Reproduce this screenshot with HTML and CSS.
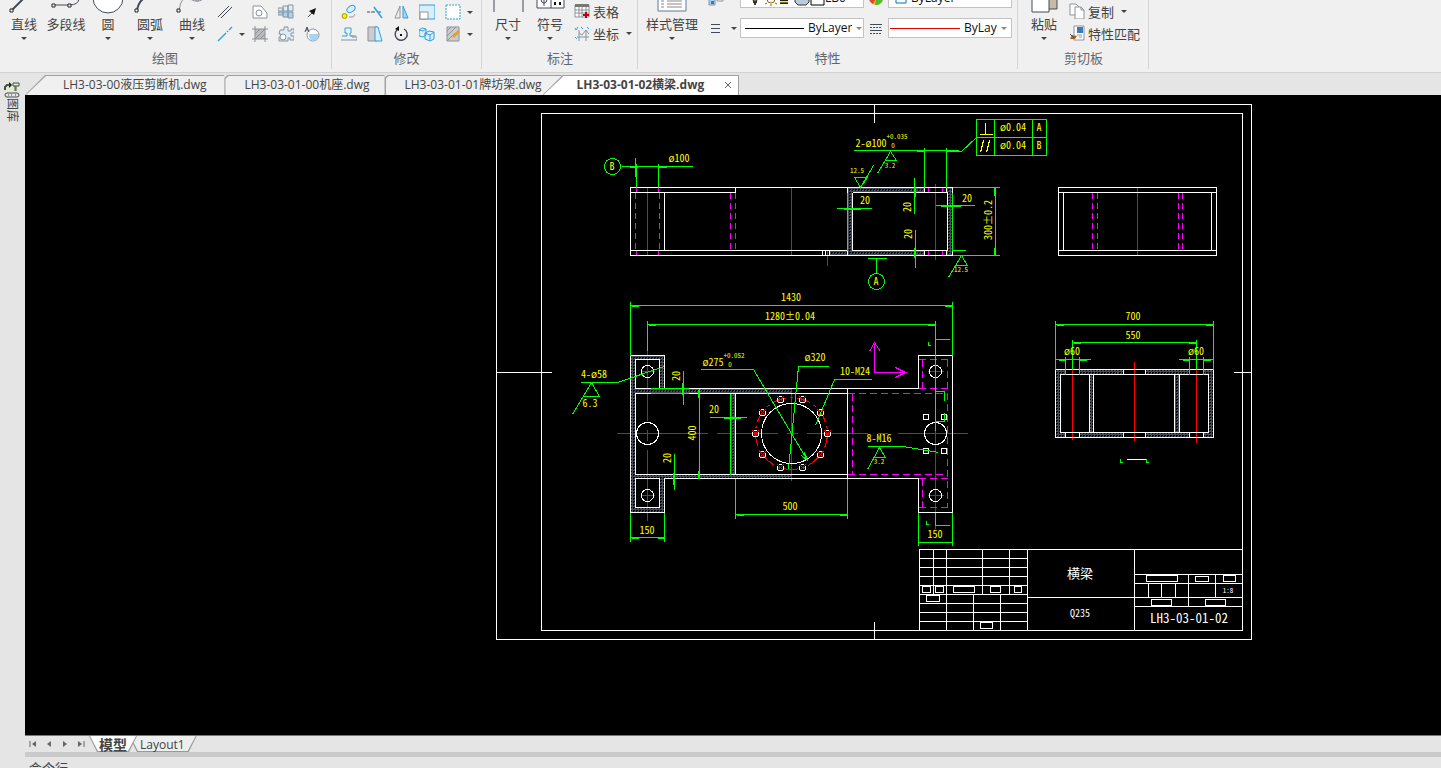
FILE: index.html
```html
<!DOCTYPE html>
<html lang="zh-CN">
<head>
<meta charset="utf-8">
<title>LH3-03-01-02横梁.dwg</title>
<link rel="stylesheet" href="styles.css">
</head>
<body>
<header class="ribbon">
  <section class="group group-draw">
    <div class="tools">
      <button class="big"><svg class="art" viewBox="0 0 32 14"><path d="M4 10 15-1" stroke-width="2"/><path class="node" d="M2 9h3v3H2z"/></svg>直线<i class="caret"></i></button>
      <button class="big"><svg class="art" viewBox="0 0 32 14"><path d="M4 5h15q10 0 10-7"/><path class="node" d="M2 4h3v3H2zM18 4h3v3h-3z"/></svg>多段线</button>
      <button class="big"><svg class="art" viewBox="0 0 32 14"><circle class="paper" cx="16" cy="-2" r="15"/></svg>圆<i class="caret"></i></button>
      <button class="big"><svg class="art" viewBox="0 0 32 14"><path d="M3 11Q4 3 9-1" stroke-width="2"/><path class="node" d="M1 9h3v3H1z"/></svg>圆弧<i class="caret"></i></button>
      <button class="big"><svg class="art" viewBox="0 0 32 14"><path class="dim" d="M3 11Q5-6 14-1t14-1M18-1q3 4 6 0"/><path class="node" d="M1 9h3v3H1z"/></svg>曲线<i class="caret"></i></button>
      <div class="grid">
        <button aria-label="构造线"><svg class="icon" viewBox="0 0 16 16"><path d="M1 13 12 2M4 14 15 3"/></svg></button>
        <button aria-label="区域"><svg class="icon" viewBox="0 0 16 16"><path class="dim paper" d="M1 2h8l6 7v5H1z"/><circle class="dim" cx="7" cy="9" r="3"/></svg></button>
        <button aria-label="螺栓"><svg class="icon" viewBox="0 0 16 16"><path class="dim pale" d="M0 4h5v3H0zM5 2h5v5H5zM10 1h5v6h-5z"/><path class="dim sky" d="M0 8h5v3H0zM5 8h5v5H5zM10 8h5v6h-5z"/></svg></button>
        <button aria-label="箭头"><svg class="icon" viewBox="0 0 16 16"><path d="M4 13 9 8"/><path class="black" d="m12 4-2 7-5-4z"/></svg></button>
        <button class="drop" aria-label="射线"><svg class="icon" viewBox="0 0 16 16"><path class="blue" d="m1 15 8-8m1-1 1-1m1-1 3-3" stroke-width="1.4"/></svg><i class="caret"></i></button>
        <button aria-label="填充"><svg class="icon" viewBox="0 0 16 16"><path fill="#bbb" stroke="none" d="M3 3h10v10H3z"/><path class="dim" d="M3 0v16M13 0v16M0 3h16M0 13h16M3 8l5-5M3 13 13 3M8 13l5-5"/></svg></button>
        <button aria-label="零件"><svg class="icon" viewBox="0 0 16 16"><path class="dim pale" d="M2 4h4V1h4v4h3V3h3v4h-3v3h3v4h-4v-2h-2v3H1v-4h2V8H1z"/><circle class="dim paper" cx="5" cy="11" r="3"/></svg></button>
        <button aria-label="方向"><svg class="icon" viewBox="0 0 16 16"><circle class="dim paper" cx="9" cy="9" r="6"/><path class="sky" stroke="none" d="M5 8h9q1 6-5 7-4-1-4-7"/><path d="m1 6 2-5 2 5M2 4h2"/></svg></button>
      </div>
    </div>
    <h2>绘图</h2>
  </section>
  <section class="group group-modify">
    <div class="tools">
      <div class="grid">
        <button aria-label="复制对象"><svg class="icon" viewBox="0 0 16 16"><ellipse class="blue pale" cx="10" cy="5" rx="4.500" ry="3" transform="rotate(-35 10 5)"/><circle cx="3.500" cy="12" r="2.500" fill="#fe0" stroke="#a90"/><path stroke="#b88" d="M8 13h4l2-3"/></svg></button>
        <button aria-label="修剪"><svg class="icon" viewBox="0 0 16 16"><path d="M0 8h3m1 0h4"/><path class="blue" d="m7 3 8 11M10 8h4" stroke-width="1.5"/></svg></button>
        <button aria-label="镜像"><svg class="icon" viewBox="0 0 16 16"><path class="dim" d="M2 14h5V2z"/><path class="blue sky" d="M10 14h5L10 2z"/></svg></button>
        <button aria-label="缩放"><svg class="icon" viewBox="0 0 16 16"><path class="blue pale" d="M0 1h16v14H0z"/><path class="paper dim" d="M1 8h8v7H1z"/></svg></button>
        <button class="drop" aria-label="选择"><svg class="icon" viewBox="0 0 16 16"><path class="paper blue" stroke-dasharray="2 1" d="M1 1h14v14H1z"/></svg><i class="caret"></i></button>
        <button aria-label="偏移"><svg class="icon" viewBox="0 0 16 16"><path class="blue" d="M1 10h5V7H4V2h6v5H9v3h6"/><path class="dim" d="M0 14h16v-3h-5V9"/></svg></button>
        <button aria-label="拉伸"><svg class="icon" viewBox="0 0 16 16"><path class="dim" fill="#ccc" d="M1 1h9v14H1z"/><path class="blue pale" d="M8 1h3l4 14H8z"/></svg></button>
        <button aria-label="旋转"><svg class="icon" viewBox="0 0 16 16"><path d="M4 4a6 6 0 1 0 7-1" stroke-width="1.400"/><path class="black" d="M6 0v5L2 3zM7 8h2v2H7z"/></svg></button>
        <button aria-label="阵列"><svg class="icon" viewBox="0 0 16 16"><path class="blue pale" d="M0 4l3-2 4 1v6l-3 2-4-1zM6 7l4-2 5 1v7l-4 2-5-2zM0 4l4 1 3-2M6 7l5 2 4-3M11 9v6"/></svg></button>
        <button class="drop" aria-label="编辑填充"><svg class="icon" viewBox="0 0 16 16"><path class="dim" fill="#ccc" d="M2 1h12v14H2z"/><path class="dim" d="m2 5 4-4M2 10l9-9M2 15l8-8"/><path d="m8 11 6-6" stroke="#e6a030" stroke-width="3"/></svg><i class="caret"></i></button>
      </div>
    </div>
    <h2>修改</h2>
  </section>
  <section class="group group-note">
    <div class="tools">
      <button class="big"><svg class="art" viewBox="0 0 32 14"><path d="M2-1v13M31-1v13"/></svg>尺寸<i class="caret"></i></button>
      <button class="big"><svg class="art" viewBox="0 0 32 14"><path class="paper" d="M3-3h27v11H3zM17-3V8"/><path d="M7-1q0 4 3 4t3-4M10-3v9"/><path class="black" d="M20 2h2v3h-2zM25 2h2v3h-2z"/></svg>符号<i class="caret"></i></button>
      <div class="list">
        <button><svg class="icon" viewBox="0 0 16 16"><path class="paper dim" d="M1 2h14v12H1zM1 7h14M1 10h14M5 4v10M8 4v10M12 4v10"/><path d="M1 1h14v3H1z" fill="#777" stroke="none"/><path stroke="#c00000" stroke-width="2" d="M9 12h6M12 9v6"/></svg>表格</button>
        <button><svg class="icon" viewBox="0 0 16 16"><path class="dim" d="M5 5v11M3 12h12M5 8l3 2 4-5 3 4M12 5v11"/><path class="blue" d="m1 3 1 2 2-3M7 2l2 2M13 2l2 2M1 12l2 2"/></svg>坐标<i class="caret"></i></button>
      </div>
    </div>
    <h2>标注</h2>
  </section>
  <section class="group group-props">
    <div class="tools">
      <button class="big wide"><svg class="art" viewBox="0 0 32 14"><path class="paper steel" d="M2-3h28v14H2z"/><path d="M5 1h3M11 1h15M5 4h3M11 4h15M5 7h3M11 7h15" stroke="#888"/></svg>样式管理<i class="caret"></i></button>
      <div class="props">
        <button aria-label="图层管理"><svg class="icon" viewBox="0 0 16 16"><path class="dim sky" d="M1 9h6v6H1z"/><path fill="#3b78b5" stroke="none" d="M3 11h3v3H3z"/><path class="paper dim" d="M9 6h6v5H9z"/></svg></button>
        <label class="field field-layer">
          <svg class="layer-art" viewBox="0 0 80 16"><circle cx="10" cy="8" r="3" fill="#f7cf50" stroke="#444"/><path stroke="#333" stroke-width="2" d="M8 12h4M9 14h2"/><circle cx="26" cy="9" r="4" fill="#fff" stroke="#a46000"/><path d="m20 14 2-1M32 14l-2-1M26 14v2" stroke="#a46000"/><path stroke="#222" stroke-width="2" d="M35 10h8M35 13h8"/><path stroke="#cc0" d="M35 12h8"/><path fill="#b9cbdc" stroke="#333" d="M50 8h14v4l-3 3h-8l-3-3z"/><path class="paper" stroke="#000" d="M66 5h13v10H66z"/></svg>
          <select aria-label="图层"><option>LB0</option></select>
        </label>
        <button aria-label="颜色"><svg class="icon" viewBox="0 0 16 16"><circle cx="8" cy="8" r="7" fill="#f5b81c" stroke="none"/><path fill="#e4442c" stroke="none" d="M8 8H1a7 7 0 0 0 4 6z"/><path fill="#55b830" stroke="none" d="m8 8 7-1a7 7 0 0 1-8 8z"/></svg></button>
        <label class="field"><svg class="swatch" viewBox="0 0 12 12"><path fill="#fff" stroke="#0070c0" d="M1 1h10v10H1z"/></svg><select class="left" aria-label="颜色列表"><option>ByLayer</option></select></label>
        <button class="drop" aria-label="线宽"><svg class="icon crisp" viewBox="0 0 16 16"><path d="M4 4h9M4 8h9M4 12h9"/></svg><i class="caret"></i></button>
        <label class="field"><span class="line"></span><select aria-label="线型"><option>ByLayer</option></select><i class="caret"></i></label>
        <button aria-label="线型管理"><svg class="icon crisp" viewBox="0 0 16 16"><path d="M2 4h12M2 10h12" /><path stroke-dasharray="2 1" d="M2 7h12M2 13h12"/></svg></button>
        <label class="field"><span class="line red"></span><select class="short" aria-label="线宽列表"><option>ByLayer</option></select><i class="caret"></i></label>
      </div>
    </div>
    <h2>特性</h2>
  </section>
  <section class="group group-clip">
    <div class="tools">
      <button class="big"><svg class="art" viewBox="0 0 32 14"><path fill="#c8baa6" d="M20-3h9v12h-9z"/><path class="paper" d="M4-3h17v15H4z"/></svg>粘贴<i class="caret"></i></button>
      <div class="list">
        <button><svg class="icon" viewBox="0 0 16 16"><path class="paper dim" d="M1 1h6l3 3v8H1z"/><path class="paper dim" d="M6 4h6l3 3v9H6zM12 4v3h3"/></svg>复制<i class="caret"></i></button>
        <button><svg class="icon" viewBox="0 0 16 16"><path class="paper dim" d="M5 1h10v14H5z"/><path fill="#3b78b5" stroke="none" d="M8 2h6v6H8z"/><path class="dim" d="M8 10h5M10 12h3"/><path fill="#b06018" stroke="none" d="m1 14 2-4 5 1-2 3z"/><path d="m1 9 4 4"/></svg>特性匹配</button>
      </div>
    </div>
    <h2>剪切板</h2>
  </section>
</header>

<div class="workspace">
  <aside class="dock">
    <button><svg class="dock-icon" viewBox="0 0 16 16"><path fill="#e4eccb" stroke="none" d="M0 0h16v10H0z"/><path class="black" d="m5 0 3 3-3 3z"/><path d="M1 8V5l2-2h3" stroke-width="2"/><path d="M9 1h6v3H9zM12 4v5M11 4v5"/><rect x="1" y="11" width="14" height="4" rx="2"/><path d="M4 13h1M7 13h1M11 13h1"/></svg>图库</button>
  </aside>
  <main class="main">
    <nav class="tabs" role="tablist">
      <button class="tab tab-first" role="tab"><span>LH3-03-00液压剪断机.dwg</span></button>
      <button class="tab" role="tab"><span>LH3-03-01-00机座.dwg</span></button>
      <button class="tab tab-under" role="tab"><span>LH3-03-01-01牌坊架.dwg</span></button>
      <button class="tab tab-active" role="tab" aria-selected="true"><span>LH3-03-01-02横梁.dwg</span><svg class="close" viewBox="0 0 8 8"><path d="m1 1 6 6M7 1 1 7"/></svg></button>
    </nav>

    <div class="canvas">
      <svg class="sheet" viewBox="25 95 1416 640" role="img" aria-label="横梁">
        <defs>
          <pattern id="hatch" width="3" height="3" patternUnits="userSpaceOnUse"><path d="M2 0h1v1H2zM1 1h1v1H1zM0 2h1v1H0z" fill="#0ff" shape-rendering="crispEdges"/></pattern>
          <g id="bolt"><circle r="3" stroke="#fff"/><path d="m-3-3 6 6m0-6-6 6" stroke="#f00"/></g>
        </defs>

        <g fill="url(#hatch)" stroke="none">
          <path d="M847 187h77v5h-72v58h72v5h-94v-5h17zM947 187h5v68h-5z"/>
          <path d="M630 355h34v33h127v5h-56v81h56v4H664v34h-34zM635 359v29h24v-29zM635 393v81h95v-81zM635 478v29h24v-29z" fill-rule="evenodd"/>
          <path d="M1055 369h10v5h-5v58h5v5h-10zM1079 369h44v5h-30v58h30v5h-44v-5h10v-58h-10zM1145 369h44v5h-10v58h10v5h-44v-5h29v-58h-29zM1203 369h10v68h-10v-5h5v-58h-5z"/>
        </g>

        <g class="ink" transform="translate(.5 .5)">
        <g class="red">
          <path d="M647 187v68M791 187v68M827 250v15M935 183v76M1137 187v68"/>
          <path d="M1072 369v70M1134 361v79M1196 369v73M1117 368v6"/>
          <path d="M616 433h91M716 433h61M786 433h11M806 433h61M877 433h10M897 433h70"/>
          <path d="M647 350v70M647 429v11M647 449v71M791 388v92M935 350v178"/>
          <path d="M640 371h14M640 495h14M927 371h16M927 495h16"/>
          <circle cx="791" cy="433" r="36" stroke-dasharray="14 4 3 4"/>
        </g>

        <g class="magenta">
          <path stroke-dasharray="6 4" d="M635 192v58M659 192v58M730 192v58M735 192v58M1092 192v58M1097 192v58M1178 192v58M1182 192v58"/>
          <path d="M636 187v5M658 187v5M636 250v5M658 250v5M928 187v5M942 187v5M928 250v5M942 250v5"/>
          <path stroke-dasharray="7 4" d="M918 359h34M922 359v29M947 359v148M847 393h100M852 393v81M847 474h100M918 388h29M918 478h29M922 478v29M918 507h34"/>
          <path d="M874 372v-29M869 351l5-9 6 9M874 372h31M895 367l10 5-10 5"/>
        </g>

        <g class="white">
          <path d="M496 104h755v535H496zM541 113h701v517H541zM874 104v18M874 621v18M496 372h55M1233 372h18"/>
          <path d="M630 187h322v68H630zM630 192h105v-5M664 192v58M630 250h217M847 187v68M852 192v58M852 192h95M852 250h95M947 192v58M924 187v5M946 187v5M924 250v5M946 250v5M822 250v5M825 250v5M829 250v5"/>
          <path d="M1058 187h158v68h-158zM1058 192h158M1058 250h158M1063 192v58M1211 192v58"/>
          <path d="M1055 369h158v68h-158zM1060 374h148v58h-148zM1089 374v58M1093 374v58M1174 374v58M1179 374v58M1065 369v5M1079 369v5M1123 369v5M1145 369v5M1189 369v5M1203 369v5M1065 432v5M1079 432v5M1123 432v5M1145 432v5M1189 432v5M1203 432v5M1126 459h19"/>
          <path d="M918 388H664v-33h-34v157h34v-34h254v34h34V355h-34zM635 359h24v29h-24zM635 478h24v29h-24zM847 393H635v81h212M730 393v81M735 393v81M847 388v90"/>
          <circle cx="647" cy="433" r="11"/><circle cx="647" cy="371" r="6"/><circle cx="647" cy="495" r="6"/>
          <circle cx="935" cy="433" r="11"/><circle cx="935" cy="371" r="6"/><circle cx="935" cy="495" r="6"/>
          <circle cx="791" cy="433" r="30"/>
          <path d="M923 414h5v5h-5zM941 414h5v5h-5zM923 448h5v5h-5zM941 448h5v5h-5z"/>
          <use href="#bolt" x="827" y="433"/><use href="#bolt" x="820" y="412"/><use href="#bolt" x="802" y="399"/><use href="#bolt" x="780" y="399"/><use href="#bolt" x="762" y="412"/>
          <use href="#bolt" x="755" y="433"/><use href="#bolt" x="762" y="454"/><use href="#bolt" x="780" y="467"/><use href="#bolt" x="802" y="467"/><use href="#bolt" x="820" y="454"/>
          <path d="M919 630v-81h323M1027 549v81M1134 549v81M919 558h108M919 567h108M919 576h108M919 585h108M919 594h108M919 603h108M919 612h108M919 621h108M933 549v45M946 549v81M982 549v45M1009 549v45M973 594v36M1000 594v36M1027 597h107"/>
          <path d="M1134 574h108M1134 583h108M1134 597h108M1134 606h108M1188 574v32M1215 574v23M1148 583v14M1161 583v14M1175 583v14"/>
          <path d="M922 586h8v6h-8zM935 586h8v6h-8zM953 586h21v6h-21zM990 586h10v6h-10zM1014 586h7v6h-7zM926 595h13v6h-13zM980 622h12v6h-12zM1146 575h31v6h-31zM1195 576h13v5h-13zM1223 575h12v6h-12zM1151 599h20v6h-20zM1205 599h20v6h-20z"/>
        </g>

        <g class="green">
          <circle cx="612" cy="166" r="8"/><circle cx="876" cy="281" r="8"/>
          <path d="M621 166h71M635 157v19M636 163v24M658 163v24M629 167h8M658 167h8"/>
          <path d="M853 150h105M924 147v40M946 147v40M916 151h8M946 151h15l15-14M976 119h70v36h-70zM976 137h70M994 119v36M1032 119v36"/>
          <path d="M877 173l13-22 6 9h-12M873 165l-13 22-6-10h13l-7 10M948 277l13-22 6 10h-13"/>
          <path d="M836 208h35M843 209h17M847 192v58M935 205h39M940 206h20M952 192v58M914 177v36M915 186v10M915 229v38M914 247v10"/>
          <path d="M952 187h47M952 255h47M952 250h13M995 187v68M994 187v8M994 247v8M867 258h19M876 258v15"/>
          <path d="M630 305h322M630 301v54M952 301v54M631 306h7M944 306h8M647 324h288M647 320v30M935 320v110M648 325h7M927 325h8"/>
          <path d="M1055 324h158M1055 320v49M1213 320v49M1056 325h7M1205 325h8M1072 342h124M1072 339v30M1196 339v30M1073 343h7M1188 343h8M1055 359h35M1178 359h35M1065 356v18M1079 356v18M1189 356v18M1203 356v18M1058 360h7M1079 360h7M1182 360h7M1203 360h7M1120 458v4h2M1146 458v4h2"/>
          <path d="M735 514h112M735 478v40M847 478v40M736 515h7M839 515h8M630 537h34M630 512v29M664 512v29M631 538h7M657 538h7M918 542h34M918 512v33M952 512v33"/>
          <path d="M699 388v90M698 389v8M698 470v8M683 370v34M682 382v12M674 453v36M673 472v12M709 417h37M723 418h17M650 388h38M650 393h38M730 393v81"/>
          <path d="M700 369h53l54 91-6-5M804 452l3 8M828 366h-30l-10 103M871 379h-37l-19 46"/>
          <path d="M580 382h37l47-16M572 414l19-32 8 14h-16M867 446h35l36 6M867 469l12-22 6 10h-12"/>
          <path d="M935 339h14M928 341v4h2M935 525h14M926 520v4h2M935 512v13M935 391h9v9M944 412v9h-9"/>
        </g>

        <g class="yellow"><path d="M985 122v12M979 134h13M980 152l3-12M986 152l3-12"/></g>
        </g>

        <g class="label" transform="translate(0 -1)">
          <text x="612" y="171">B</text><text x="679" y="163">ø100</text>
          <text x="871" y="148">2-ø100</text><text class="tiny" x="897" y="140">+0.035</text><text class="tiny" x="893" y="149">0</text>
          <text class="tiny" x="857" y="174">12.5</text><text class="tiny" x="890" y="169">3.2</text><text class="tiny" x="961" y="273">12.5</text>
          <text x="865" y="205">20</text><text x="967" y="203">20</text>
          <text transform="translate(911 208) rotate(-90)">20</text><text transform="translate(912 235) rotate(-90)">20</text><text transform="translate(992 221) rotate(-90)">300±0.2</text>
          <text x="1013" y="132">ø0.04</text><text x="1039" y="132">A</text><text x="1013" y="150">ø0.04</text><text x="1039" y="150">B</text><text x="876" y="286">A</text>
          <text x="791" y="302">1430</text><text x="790" y="321">1280±0.04</text>
          <text x="1133" y="321">700</text><text x="1133" y="340">550</text><text x="1072" y="356">ø60</text><text x="1196" y="356">ø60</text>
          <text x="594" y="379">4-ø58</text><text x="590" y="408">6.3</text>
          <text x="713" y="367">ø275</text><text class="tiny" x="734" y="359">+0.052</text><text class="tiny" x="730" y="368">0</text>
          <text x="815" y="362">ø320</text><text x="855" y="376">10-M24</text><text x="879" y="443">8-M16</text><text class="tiny" x="879" y="465">3.2</text>
          <text x="714" y="414">20</text><text transform="translate(680 377) rotate(-90)">20</text><text transform="translate(671 459) rotate(-90)">20</text><text transform="translate(696 434) rotate(-90)">400</text>
          <text x="790" y="511">500</text><text x="647" y="535">150</text><text x="935" y="539">150</text>
        </g>
        <g class="label pale-text">
          <text class="cjk" x="1080" y="578">横梁</text><text x="1080" y="617">Q235</text><text class="number" x="1189" y="623">LH3-03-01-02</text><text class="tiny" x="1228" y="593">1:8</text>
        </g>
      </svg>
    </div>

    <nav class="layouts">
      <button class="nav" aria-label="首个"><svg viewBox="0 0 8 8"><path d="M1 1v6"/><path class="gray" d="M7 1v6L3 4z"/></svg></button>
      <button class="nav" aria-label="上一个"><svg viewBox="0 0 8 8"><path class="gray" d="M6 1v6L2 4z"/></svg></button>
      <button class="nav" aria-label="下一个"><svg viewBox="0 0 8 8"><path class="gray" d="M2 1v6l4-3z"/></svg></button>
      <button class="nav" aria-label="末个"><svg viewBox="0 0 8 8"><path class="gray" d="M1 1v6l4-3z"/><path d="M7 1v6"/></svg></button>
      <button class="sheet-tab sheet-active"><span>模型</span></button>
      <button class="sheet-tab"><span>Layout1</span></button>
    </nav>
    <div class="splitter"></div>
    <footer class="command"><span>命令行</span></footer>
  </main>
</div>
</body>
</html>
```
FILE: styles.css
```css
* { box-sizing: border-box; }

body {
  margin: 0;
  height: 100vh;
  display: flex;
  flex-direction: column;
  overflow: hidden;
  background: #e5e5e5;
  color: #444;
  font: 12px "Open Sans", "Noto Sans CJK SC", sans-serif;
}

button, select {
  margin: 0;
  padding: 0;
  border: 0;
  background: none;
  color: inherit;
  font: inherit;
  white-space: nowrap;
}

svg { fill: none; stroke: #444b58; }
.dim { stroke: #8b929b; }
.steel { stroke: #607890; }
.blue { stroke: #2fa0dc; }
.paper { fill: #fff; }
.node { fill: #fff; stroke: #222; }
.pale { fill: #d9eefb; }
.sky { fill: #a8d4f3; }
.black { fill: #111; stroke: none; }
.gray { fill: #666; stroke: none; }
.crisp { shape-rendering: crispEdges; }

/* ribbon */
.ribbon {
  display: flex;
  flex: none;
  padding-bottom: 3px;
  border-bottom: 1px solid #d2d2d2;
  background: #f0f0f0;
  font-size: 13px;
}
.group {
  display: flex;
  flex-direction: column;
  border-right: 1px solid #d4d4d4;
}
.group-draw { width: 332px; padding-left: 3px; }
.group-modify { width: 150px; padding-left: 4px; }
.group-note { width: 156px; padding-left: 5px; }
.group-props { width: 380px; padding-left: 4px; }
.group-clip { width: 131px; padding-left: 5px; }
.tools { display: flex; height: 48px; }
.group h2 {
  margin: 0;
  padding-right: 4px;
  font-size: 13px;
  font-weight: 400;
  line-height: 21px;
  text-align: center;
  color: #666;
}
.big {
  display: flex;
  flex-direction: column;
  align-items: center;
  width: 42px;
  flex: none;
  line-height: 20px;
}
.big .art { width: 32px; height: 14px; flex: none; }
.big .caret { margin-top: 3px; }
.big.wide { width: 60px; }
.caret {
  flex: none;
  width: 0;
  height: 0;
  border: 3px solid transparent;
  border-top-color: #444;
  border-bottom: 0;
}
.icon { width: 16px; height: 16px; flex: none; }
.grid {
  display: grid;
  grid-template-columns: repeat(5, 26px);
  grid-auto-rows: 22px;
  align-content: start;
  padding-top: 1px;
}
.grid button { display: flex; align-items: center; justify-content: center; gap: 6px; }
.group-draw .grid { grid-template-columns: 30px 26px 26px 26px; margin-left: 4px; }
.group-draw .grid button:nth-child(4n+1) { justify-content: start; }
.group-modify .drop { justify-content: start; padding-left: 5px; width: 40px; }
.list { display: flex; flex-direction: column; padding-left: 2px; }
.group-note .list { padding-left: 3px; }
.list button { display: flex; align-items: center; gap: 3px; height: 22px; }
.list .caret { margin-left: 4px; }
.group-clip .list { padding-left: 4px; }

.props {
  display: grid;
  grid-template-columns: 38px 124px 24px 124px;
  grid-template-rows: 20px 20px;
  row-gap: 10px;
  margin-top: -12px;
}
.props > button { display: flex; align-items: center; justify-content: center; }
.props > button:first-child { justify-content: start; padding-left: 6px; }
.props > .drop { gap: 8px; justify-content: end; padding-right: 3px; }
.field {
  display: flex;
  align-items: center;
  height: 20px;
  padding: 0 4px;
  gap: 4px;
  border: 1px solid #c3c3c3;
  background: #fff;
  color: #111;
  font-size: 12px;
  overflow: hidden;
}
.field select {
  appearance: none;
  flex: 1;
  width: 44px;
  line-height: 18px;
}
.field .line { flex: none; width: 59px; border-top: 1px solid #000; }
.field .red { width: 70px; margin-left: -3px; border-color: #e00000; }
.field .caret { border-top-color: #888; }
.field select:has(+ .caret) { flex: 0 0 44px; }
.field select.short:has(+ .caret) { flex: 0 0 33px; width: 33px; min-width: 0; overflow: hidden; }
.field .layer-art { width: 80px; height: 16px; flex: none; }
.field-layer { gap: 0; }
.swatch { width: 12px; height: 12px; margin-left: 2px; }

/* workspace */
.workspace { display: flex; flex: 1; min-height: 0; }
.dock { width: 25px; flex: none; padding: 9px 0 0 4px; }
.dock button {
  display: flex;
  align-items: center;
  writing-mode: vertical-rl;
  text-orientation: sideways;
  width: 16px;
  line-height: 16px;
}
.dock-icon { width: 16px; height: 16px; }
.main { display: flex; flex-direction: column; flex: 1; min-width: 0; }

.tabs { display: flex; height: 22px; flex: none; padding-top: 2px; }
.tab {
  position: relative;
  height: 20px;
  padding: 0 15px 0 20px;
  background: #a0a0a0;
  clip-path: polygon(3px 0, 100% 0, 100% 100%, 0 100%, 0 3px);
}
.tab::before {
  content: "";
  position: absolute;
  inset: 1px 0 0 1px;
  background: #f0f0f0;
  clip-path: inherit;
}
.tab span { position: relative; line-height: 20px; }
.tab-first, .tab-active { clip-path: polygon(20px 0, 100% 0, 100% 100%, 0 100%); }
.tab-first { padding: 0 18px 0 38px; }
.tab-under { padding-right: 20px; }
.tab-active {
  display: flex;
  align-items: center;
  gap: 20px;
  margin-left: -19px;
  padding: 0 7px 0 34px;
  font-weight: 700;
}
.tab-active::before { background: #fff; right: 1px; }
.close { position: relative; width: 8px; height: 8px; stroke: #666; }

.canvas { flex: 1; min-height: 0; background: #000; }
.sheet { display: block; width: 100%; height: 100%; }
.ink { shape-rendering: crispEdges; }
.white { stroke: #fff; }
.red { stroke: #f00; }
.green { stroke: #0f0; }
.magenta { stroke: #f0f; }
.yellow { stroke: #ff0; }
.label {
  fill: #ff0;
  stroke: none;
  font-family: "Noto Sans Mono CJK SC", "Noto Sans CJK SC", sans-serif;
  font-feature-settings: "hwid";
  font-size: 10px;
  text-anchor: middle;
}
.label .tiny { font-size: 7px; }
.pale-text { fill: #fff; }
.label .number { font-size: 13px; }
.label .cjk { font-family: "Noto Sans CJK SC", sans-serif; font-size: 13px; }

.layouts { display: flex; height: 17px; flex: none; border-top: 1px solid #777; }
.nav { width: 16px; display: flex; align-items: center; justify-content: center; }
.nav svg { width: 8px; height: 8px; stroke: #666; }
.sheet-tab {
  position: relative;
  height: 16px;
  padding: 0 12px;
  line-height: 15px;
  background: #999;
  clip-path: polygon(0 0, 100% 0, calc(100% - 8px) 100%, 8px 100%);
}
.sheet-tab::before {
  content: "";
  position: absolute;
  inset: 0 1px 1px;
  background: #eee;
  clip-path: inherit;
}
.sheet-tab span { position: relative; }
.sheet-tab + .sheet-tab { margin-left: -8px; padding-left: 11px; }
.sheet-active { padding: 0 10px; font-size: 14px; font-weight: 700; z-index: 1; }
.sheet-active::before { background: #fff; }
.splitter { height: 5px; flex: none; background: #cacaca; }
.command { height: 11px; flex: none; padding: 2px 4px; overflow: hidden; font-size: 13px; line-height: 18px; }
```
